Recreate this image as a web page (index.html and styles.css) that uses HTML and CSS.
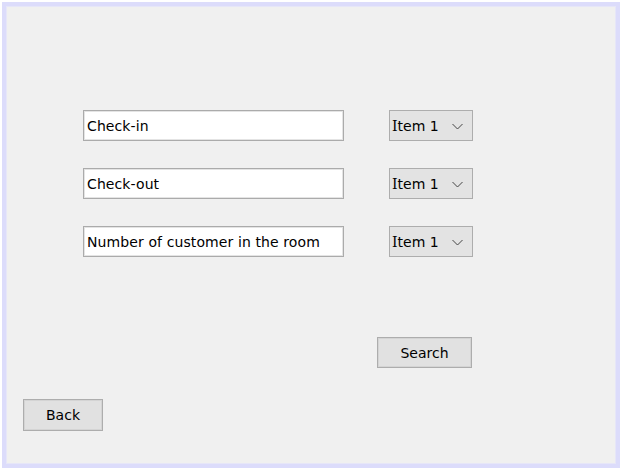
FILE: index.html
```html
<!DOCTYPE html>
<html>
<head>
<meta charset="utf-8">
<link rel="stylesheet" href="styles.css">
</head>
<body>
<div class="frame">
  <div class="form">
    <div class="field">Check-in</div>
    <div class="combo"><span><span class="cap">I</span>tem 1</span><svg class="chev" width="11" height="7" viewBox="0 0 11 7"><polyline points="0.5,1 5.5,6 10.5,1" fill="none" stroke="#444" stroke-width="1"/></svg></div>
    <div class="field">Check-out</div>
    <div class="combo"><span><span class="cap">I</span>tem 1</span><svg class="chev" width="11" height="7" viewBox="0 0 11 7"><polyline points="0.5,1 5.5,6 10.5,1" fill="none" stroke="#444" stroke-width="1"/></svg></div>
    <div class="field">Number of customer in the room</div>
    <div class="combo"><span><span class="cap">I</span>tem 1</span><svg class="chev" width="11" height="7" viewBox="0 0 11 7"><polyline points="0.5,1 5.5,6 10.5,1" fill="none" stroke="#444" stroke-width="1"/></svg></div>
  </div>
  <div class="search-row"><button class="btn search">Search</button></div>
  <div class="back-row"><button class="btn back">Back</button></div>
</div>
</body>
</html>
```
FILE: styles.css
```css
html, body {
  margin: 0;
  padding: 0;
  background: #ffffff;
}
body {
  font-family: "DejaVu Sans", sans-serif;
  font-size: 14px;
  color: #000;
}
.frame {
  margin: 2px 0 0 2px;
  width: 618px;
  height: 466px;
  box-sizing: border-box;
  border: 4px solid #dcdcfb;
  box-shadow: inset 0 0 0 1px #e6e6f8;
  background: #f0f0f0;
}
.form {
  display: grid;
  grid-template-columns: 261px 84px;
  grid-auto-rows: 31px;
  column-gap: 45px;
  row-gap: 27px;
  padding: 104px 0 0 77px;
}
.field {
  box-sizing: border-box;
  background: #fff;
  border: 1px solid #ababab;
  box-shadow: inset 0 0 0 1px #e4e4e4;
  padding: 0 3px;
  display: flex;
  align-items: center;
  white-space: nowrap;
  letter-spacing: 0.1px;
}
.combo {
  box-sizing: border-box;
  background: #e3e3e3;
  border: 1px solid #adadad;
  display: flex;
  align-items: center;
  padding: 0 0 0 2px;
  gap: 13px;
  white-space: nowrap;
}
.cap {
  font-family: "DejaVu Serif", serif;
}
.chev {
  margin-top: 2px;
}
.btn {
  box-sizing: border-box;
  background: #e1e1e1;
  border: 1px solid #adadad;
  box-shadow: inset 0 0 0 1px #d4d4d4;
  font-family: "DejaVu Sans", sans-serif;
  font-size: 14px;
  color: #000;
  padding: 0;
}
.search-row {
  padding: 80px 0 0 371px;
}
.search {
  width: 95px;
  height: 31px;
}
.back-row {
  padding: 31px 0 0 17px;
}
.back {
  width: 80px;
  height: 32px;
}
```
